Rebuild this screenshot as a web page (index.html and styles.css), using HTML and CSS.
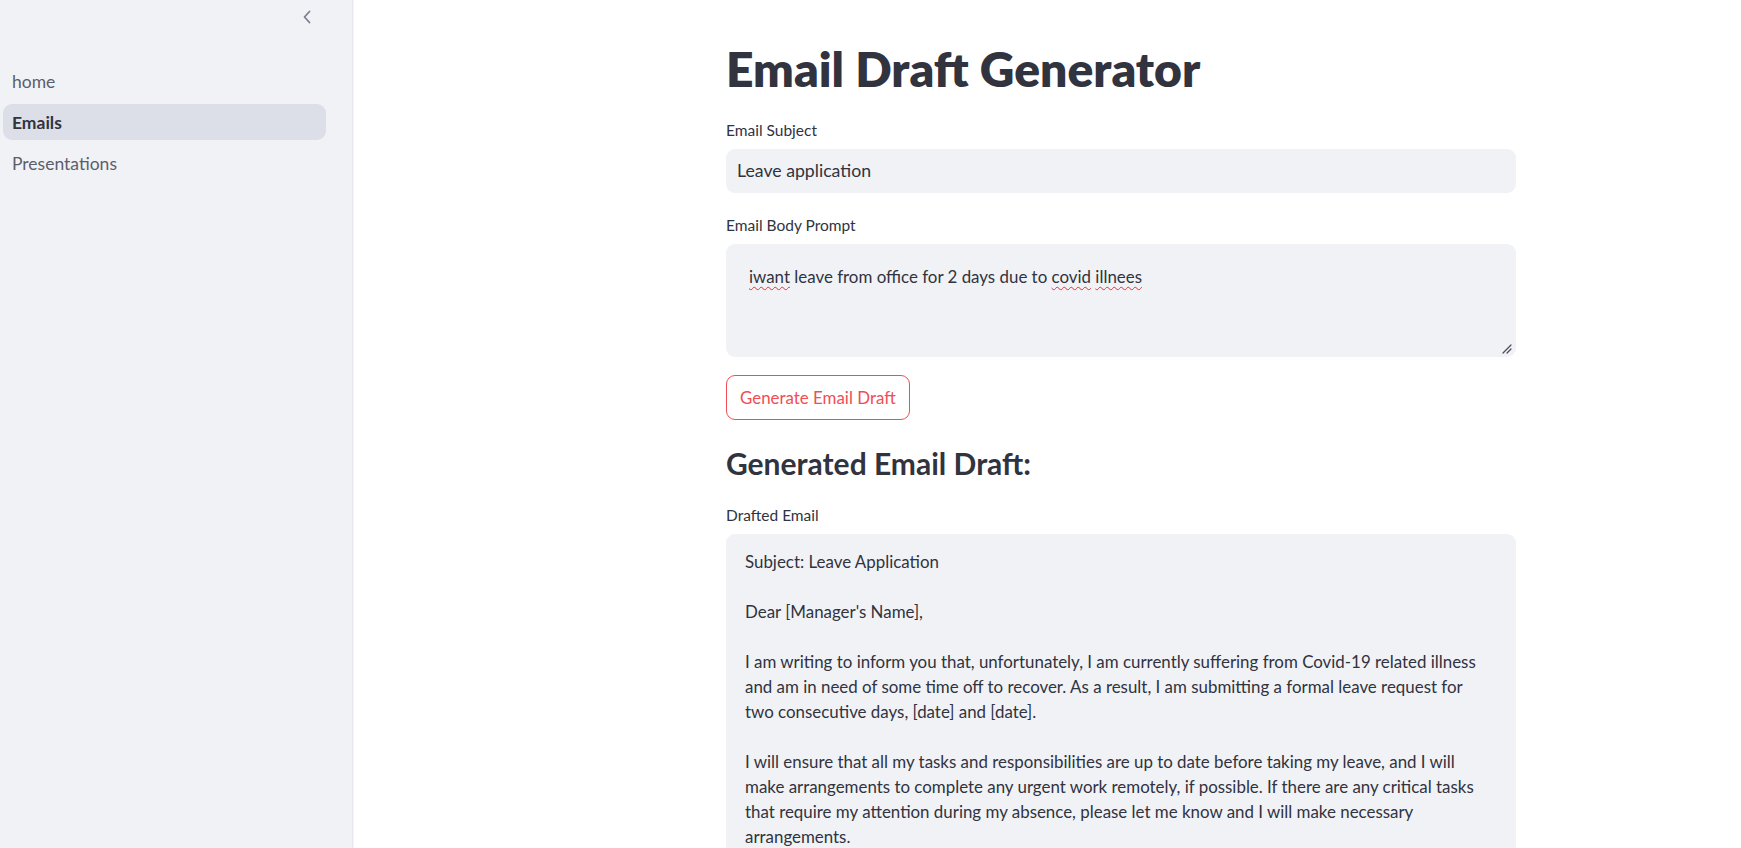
FILE: index.html
```html
<!DOCTYPE html>
<html lang="en">
<head>
<meta charset="utf-8">
<title>Email Draft Generator</title>
<link rel="stylesheet" href="styles.css">
</head>
<body>
<div class="app">
  <aside class="sidebar">
    <div class="sidebar-header">
      <button class="collapse" aria-label="Collapse sidebar">
        <svg width="10" height="14" viewBox="0 0 10 14"><path d="M7.5 1.5 L2.5 7 L7.5 12.5" fill="none" stroke="#7c7f8c" stroke-width="1.8" stroke-linecap="round" stroke-linejoin="round"/></svg>
      </button>
    </div>
    <nav class="nav">
      <a class="nav-item">home</a>
      <a class="nav-item active">Emails</a>
      <a class="nav-item">Presentations</a>
    </nav>
  </aside>
  <main class="main">
    <div class="block">
      <h1 class="title">Email Draft Generator</h1>
      <label class="label">Email Subject</label>
      <div class="input">Leave application</div>
      <label class="label">Email Body Prompt</label>
      <div class="textarea prompt"><span class="typo">iwant</span> leave from office for 2 days due to <span class="typo">covid</span> <span class="typo">illnees</span><svg class="grip" width="10" height="10" viewBox="0 0 10 10"><path d="M9 1 L1 9 M9 5 L5 9" stroke="#4a4c57" stroke-width="1.2" stroke-linecap="round"/></svg></div>
      <button class="btn">Generate Email Draft</button>
      <h2 class="subheader">Generated Email Draft:</h2>
      <label class="label label-draft">Drafted Email</label>
      <div class="textarea draft">Subject: Leave Application

Dear [Manager's Name],

I am writing to inform you that, unfortunately, I am currently suffering from Covid-19 related illness
and am in need of some time off to recover. As a result, I am submitting a formal leave request for
two consecutive days, [date] and [date].

I will ensure that all my tasks and responsibilities are up to date before taking my leave, and I will
make arrangements to complete any urgent work remotely, if possible. If there are any critical tasks
that require my attention during my absence, please let me know and I will make necessary
arrangements.</div>
    </div>
  </main>
</div>
</body>
</html>
```
FILE: styles.css
```css
html, body {
  margin: 0;
  padding: 0;
  background: #ffffff;
}
body {
  font-family: "Lato", "Liberation Sans", sans-serif;
  color: #31333f;
}
.app {
  display: flex;
  height: 100vh;
  overflow: hidden;
}
.sidebar {
  width: 352px;
  flex: 0 0 352px;
  background: #f0f2f6;
  box-shadow: 1px 0 0 #e6e8ee, 2px 0 0 #f4f5f8;
  display: flex;
  flex-direction: column;
}
.sidebar-header {
  height: 63px;
  display: flex;
  justify-content: flex-end;
  align-items: flex-start;
  padding-right: 40px;
}
.collapse {
  border: 0;
  background: none;
  padding: 0;
  margin-top: 10px;
  width: 10px;
  height: 14px;
  display: flex;
}
.nav {
  display: flex;
  flex-direction: column;
  gap: 5px;
  margin: 0 26px 0 3px;
}
.nav-item {
  height: 36px;
  display: flex;
  align-items: center;
  padding-left: 9px;
  border-radius: 9px;
  font-size: 17.5px;
  color: #5c5e6a;
}
.nav-item.active {
  background: #dcdfe8;
  color: #31333f;
  font-weight: 700;
}
.main {
  flex: 1;
  min-width: 0;
}
.block {
  width: 790px;
  margin-left: 374px;
  padding-top: 40px;
  display: flex;
  flex-direction: column;
  align-items: flex-start;
}
.title {
  margin: 0;
  font-size: 48px;
  line-height: 57.6px;
  font-weight: 800;
  color: #31333f;
}
.label {
  display: block;
  font-size: 15.5px;
  line-height: 20px;
  margin-top: 22px;
  margin-bottom: 9px;
  color: #31333f;
}
.label-draft {
  margin-top: 24px;
}
.input {
  align-self: stretch;
  height: 44px;
  line-height: 44px;
  background: #f0f2f6;
  border-radius: 9px;
  padding: 0 11px;
  font-size: 17.7px;
}
.textarea {
  align-self: stretch;
  position: relative;
  background: #f0f2f6;
  border-radius: 9px;
  font-size: 16.9px;
  line-height: 25px;
  white-space: pre-wrap;
}
.prompt {
  height: 113px;
  box-sizing: border-box;
  padding: 20px 16px 0 23px;
}
.typo {
  text-decoration: underline wavy #e0333a;
  text-decoration-thickness: 1px;
  text-underline-offset: 3px;
}
.grip {
  position: absolute;
  right: 4px;
  bottom: 3px;
}
.btn {
  margin-top: 18px;
  height: 45px;
  padding: 0 13px;
  background: #ffffff;
  border: 1px solid #f04e54;
  border-radius: 9px;
  color: #f04e54;
  font-family: inherit;
  font-size: 16.9px;
}
.subheader {
  margin: 25px 0 0 0;
  font-size: 30px;
  line-height: 36px;
  font-weight: 700;
  color: #31333f;
}
.draft {
  padding: 15px 17px 20px 19px;
  height: 420px;
  box-sizing: border-box;
}
```
